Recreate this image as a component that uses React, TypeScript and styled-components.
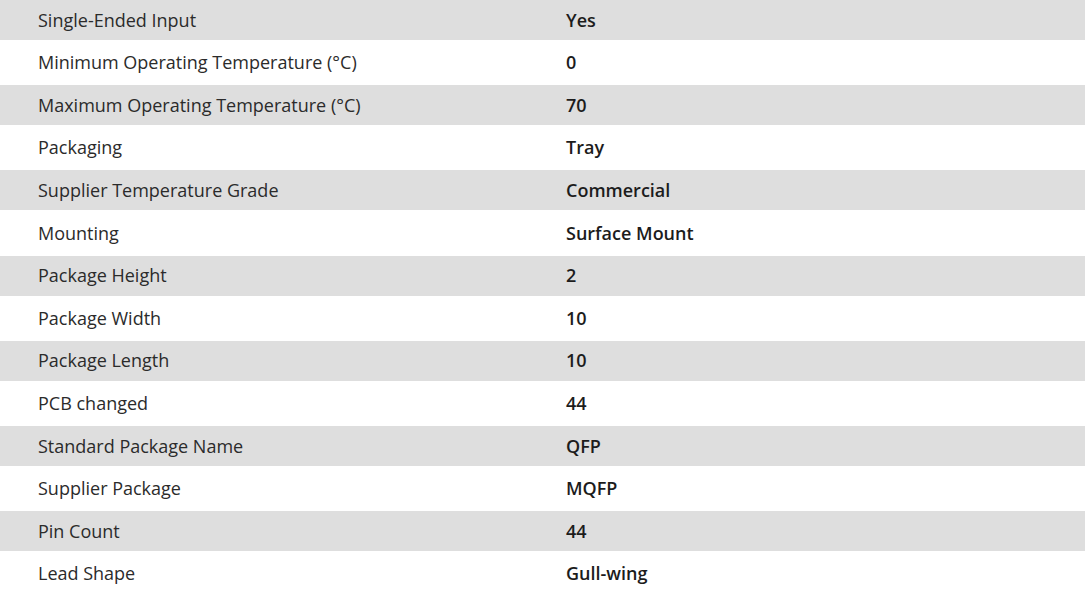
import React from "react";
import styled, { createGlobalStyle } from "styled-components";

const Global = createGlobalStyle`
  html, body { margin: 0; padding: 0; background: #ffffff; }
  body { font-family: "Open Sans", "Noto Sans", sans-serif; overflow: hidden; }
`;

const Table = styled.div`
  display: flex;
  flex-direction: column;
  gap: 2.62px;
  width: 1085px;
`;

const Row = styled.div<{ $shaded: boolean }>`
  display: grid;
  grid-template-columns: 528px 1fr;
  align-items: center;
  height: 40px;
  padding-left: 38px;
  padding-bottom: 1px;
  box-sizing: border-box;
  background: ${(p) => (p.$shaded ? "#dedede" : "#ffffff")};
`;

const Label = styled.div`
  font-size: 18px;
  color: #2b2b2b;
  font-weight: 400;
  white-space: nowrap;
`;

const Value = styled.div`
  font-size: 18px;
  color: #1c1c1c;
  font-weight: 600;
  white-space: nowrap;
`;

const rows: [string, string][] = [
  ["Single-Ended Input", "Yes"],
  ["Minimum Operating Temperature (°C)", "0"],
  ["Maximum Operating Temperature (°C)", "70"],
  ["Packaging", "Tray"],
  ["Supplier Temperature Grade", "Commercial"],
  ["Mounting", "Surface Mount"],
  ["Package Height", "2"],
  ["Package Width", "10"],
  ["Package Length", "10"],
  ["PCB changed", "44"],
  ["Standard Package Name", "QFP"],
  ["Supplier Package", "MQFP"],
  ["Pin Count", "44"],
  ["Lead Shape", "Gull-wing"],
];

export default function App() {
  return (
    <>
      <Global />
      <Table>
        {rows.map(([k, v], i) => (
          <Row key={k} $shaded={i % 2 === 0}>
            <Label>{k}</Label>
            <Value>{v}</Value>
          </Row>
        ))}
      </Table>
    </>
  );
}
